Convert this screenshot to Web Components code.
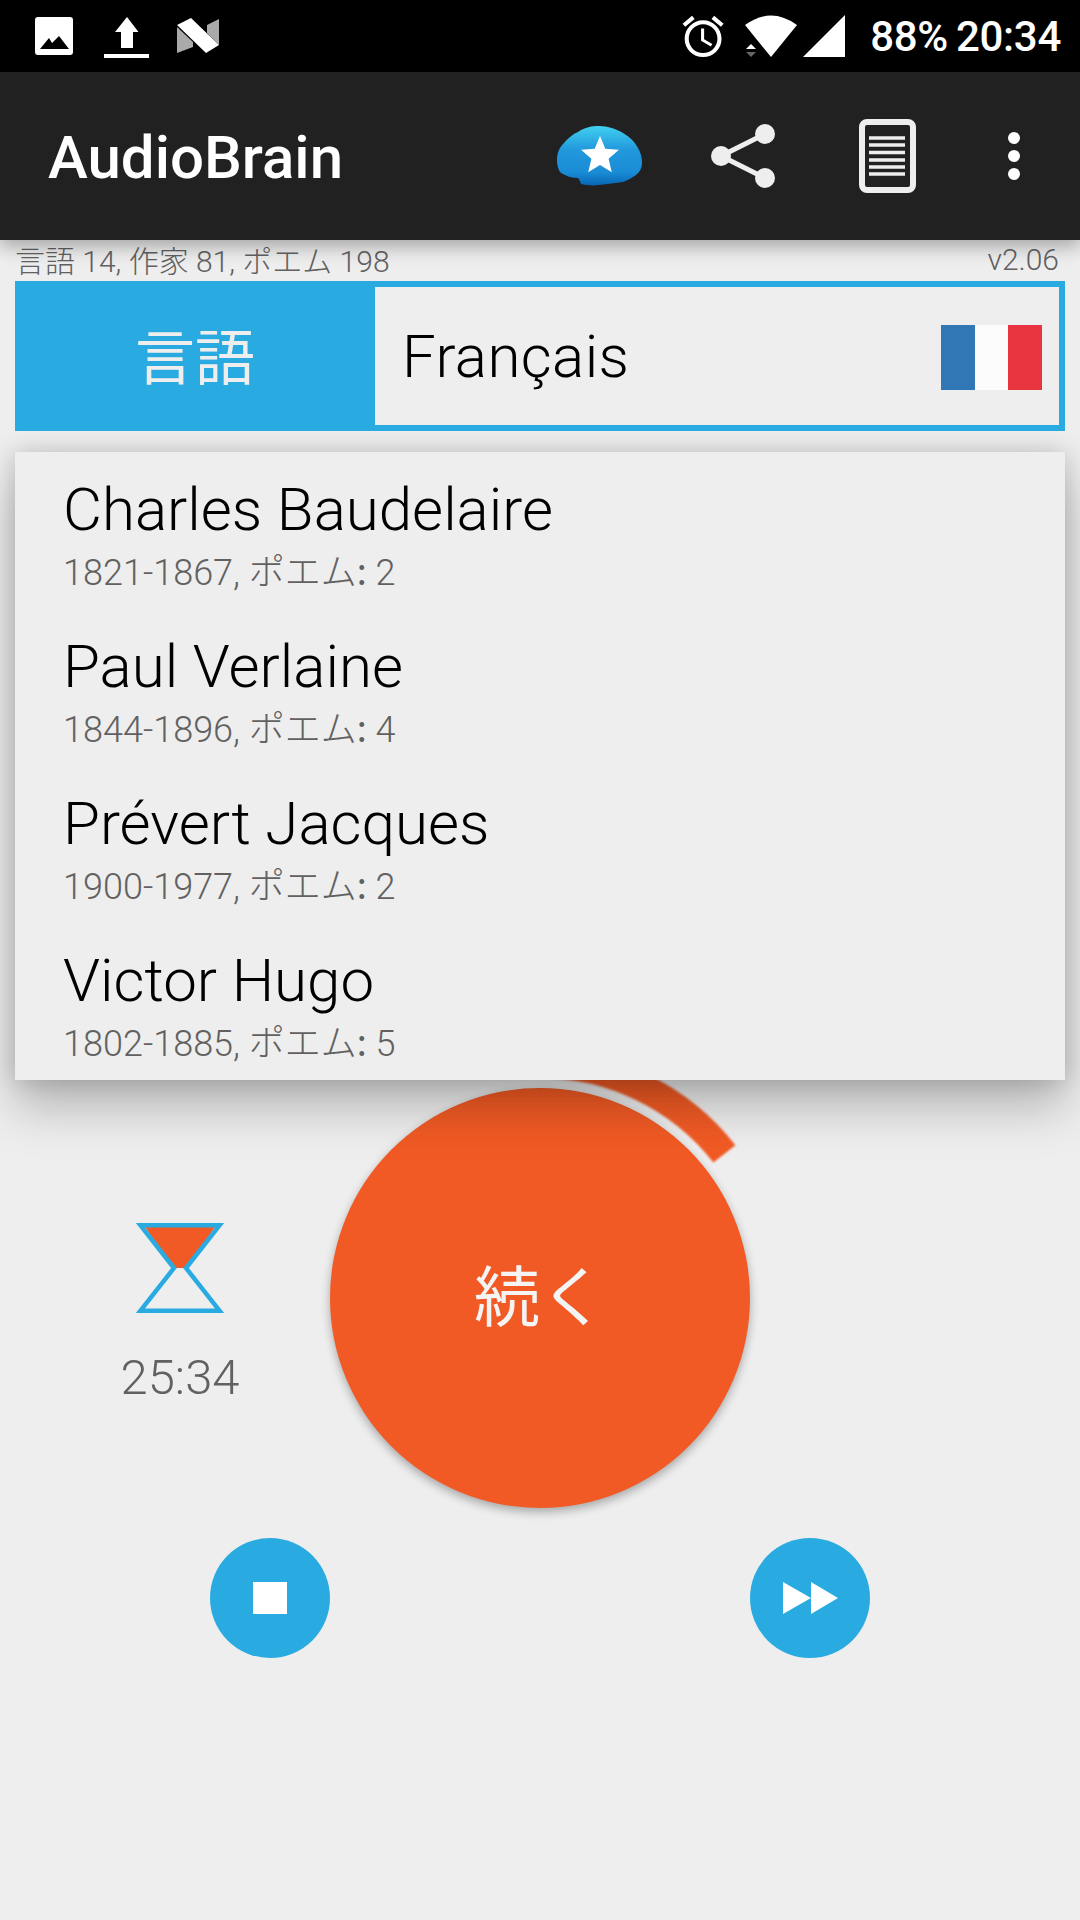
<!DOCTYPE html>
<html lang="ja">
<head>
<meta charset="utf-8">
<title>AudioBrain</title>
<style>
    html, body { margin: 0; padding: 0; }
    body {
        width: 1080px;
        height: 1920px;
        overflow: hidden;
        background: #eeeeee;
        font-family: Roboto, "Noto Sans CJK JP", sans-serif;
    }
</style>
</head>
<body>
<audio-app></audio-app>

<script>
const define = (name, html) => {
    customElements.define(name, class extends HTMLElement {
        constructor() {
            super();
            this.attachShadow({ mode: 'open' }).innerHTML = html;
        }
    });
};

define('status-bar', `
    <style>
        :host { display: block; position: relative; height: 72px; background: #000; color: #fff; }
        svg { position: absolute; top: 0; left: 0; }
        .clock {
            position: absolute; top: 0; right: 19px; height: 72px;
            display: flex; align-items: center; gap: 8px;
            font: 500 42px Roboto, sans-serif; letter-spacing: -0.3px;
        }
    </style>
    <svg width="1080" height="72" viewBox="0 0 1080 72">
        <!-- picture -->
        <path fill="#fff" fill-rule="evenodd" d="M38 17h32a3 3 0 0 1 3 3v32a3 3 0 0 1-3 3H38a3 3 0 0 1-3-3V20a3 3 0 0 1 3-3zM40 49h29L59 36l-7 7-3-5z"/>
        <!-- upload -->
        <path fill="#fff" d="M127 17l11.500 15H133v16h-12V32h-6zM104 54h45v4h-45z"/>
        <!-- android n -->
        <path fill="#aaa" d="M177 27l16 15v5l-16 6zM207 25l12-6v26l-12-12z"/>
        <path fill="#fff" d="M177 25l14-7 28 27-13 8z"/>
        <!-- alarm -->
        <g transform="translate(678.500 12) scale(2.05)">
            <path fill="#fff" d="M22 5.720l-4.600-3.860-1.290 1.530 4.600 3.860L22 5.720zM7.880 3.390L6.600 1.860 2 5.710l1.290 1.530 4.590-3.850zM12.500 8H11v6l4.750 2.850.75-1.230-4-2.370V8zM12 4c-4.970 0-9 4.030-9 9s4.020 9 9 9c4.970 0 9-4.030 9-9s-4.030-9-9-9zm0 16c-3.870 0-7-3.130-7-7s3.130-7 7-7 7 3.130 7 7-3.130 7-7 7z"/>
        </g>
        <!-- wifi -->
        <path fill="#fff" d="M745 25Q771 6 797 25L771 57z"/>
        <path fill="#fff" d="M751 44l5 5h-10z"/>
        <path fill="#666" d="M746 52h10l-5 5z"/>
        <!-- signal -->
        <path fill="#fff" d="M803 57l42-42v42z"/>
    </svg>
    <div class="clock"><span>88%</span><span>20:34</span></div>
`);

define('app-bar', `
    <style>
        :host {
            display: flex; align-items: center; height: 168px;
            padding: 2px 0 0 48px; box-sizing: border-box;
            background: #212121; color: #fff;
            position: relative; z-index: 4;
            box-shadow: 0 6px 18px rgba(0, 0, 0, 0.32);
        }
        .title { font: 500 60px Roboto, sans-serif; }
        svg { position: absolute; top: 0; left: 540px; }
    </style>
    <div class="title">AudioBrain</div>
    <svg width="540" height="168" viewBox="540 72 540 168">
        <defs>
            <linearGradient id="brain" x1="0" y1="0" x2="0" y2="1">
                <stop offset="0" stop-color="#40d0f0"/>
                <stop offset="0.4" stop-color="#2298dc"/>
                <stop offset="0.78" stop-color="#1a8cd6"/>
                <stop offset="1" stop-color="#0766b4"/>
            </linearGradient>
        </defs>
        <path fill="url(#brain)" d="M557 160C557 152 560 147 564 143C568 138 573 134 578 132C585 127 592 126 599 126C608 126 616 129 623 133C630 137 635 142 638 148C641 153 642 158 642 163C642 168 640 172 636 175C632 178 628 180 623 182C616 183 608 184 599 185C592 186 586 185 581 184C580 181 579 179 578 178C572 178 566 176 561 173C558 170 557 165 557 160z"/>
        <path fill="#fff" d="M600 136L605.300 148.700 619 149.800 608.600 158.800 611.800 172.200 600 165 588.200 172.200 591.400 158.800 581 149.800 594.700 148.700z"/>
        <!-- share -->
        <g fill="#eee" stroke="none">
            <circle cx="765" cy="134" r="10"/>
            <circle cx="721" cy="156" r="10"/>
            <circle cx="765" cy="178" r="10"/>
        </g>
        <path fill="none" stroke="#eee" stroke-width="5" d="M765 134L721 156L765 178"/>
        <!-- document -->
        <rect x="862" y="122" width="51" height="68" rx="5" fill="none" stroke="#eee" stroke-width="6"/>
        <path stroke="#eee" stroke-width="3.500" d="M869 138h36M869 145h36M869 152.500h36M869 160h36M869 167h36M869 174h36"/>
        <!-- overflow -->
        <g fill="#fff">
            <circle cx="1014" cy="138" r="6"/>
            <circle cx="1014" cy="156" r="6"/>
            <circle cx="1014" cy="174" r="6"/>
        </g>
    </svg>
`);

define('stats-line', `
    <style>
        :host {
            display: flex; justify-content: space-between; align-items: center;
            height: 41px; box-sizing: border-box; padding: 0 6px 3px 0;
            font: 300 30px Roboto, "Noto Sans CJK JP", sans-serif; color: #616161;
        }
    </style>
    <span><slot name="counts"></slot></span>
    <span><slot name="version"></slot></span>
`);

define('lang-picker', `
    <style>
        :host {
            display: flex; height: 150px; box-sizing: border-box;
            border: 6px solid #29abe2; background: #eeeeee;
            position: relative; z-index: 3;
        }
        .label {
            width: 354px; box-sizing: border-box; background: #29abe2; color: #eeeeee;
            display: flex; align-items: center; justify-content: center;
            font: 400 60px "Noto Sans CJK JP", sans-serif;
            padding: 0 6px 6px 0;
        }
        .value {
            flex: 1; display: flex; align-items: center; justify-content: space-between;
            padding: 0 17px 0 27px;
            font: 300 60px Roboto, sans-serif; letter-spacing: 0.4px; color: #000;
        }
        .flag { display: flex; width: 101px; height: 65px; margin-top: 2px; }
        .flag i { flex: 1; }
    </style>
    <div class="label"><slot name="label"></slot></div>
    <div class="value">
        <slot name="value"></slot>
        <div class="flag">
            <i style="background:#3277b5"></i>
            <i style="background:#fcfcfc"></i>
            <i style="background:#e8353f"></i>
        </div>
    </div>
`);

define('poet-list', `
    <style>
        :host {
            display: block; margin-top: 21px; height: 628px; background: #eeeeee;
            position: relative; z-index: 2;
            box-shadow: 0 26px 46px rgba(0, 0, 0, 0.25), 0 0 22px rgba(0, 0, 0, 0.16);
        }
    </style>
    <slot></slot>
`);

define('poet-item', `
    <style>
        :host {
            display: block; height: 157px; box-sizing: border-box;
            padding: 23px 0 0 48px; overflow: hidden;
        }
        .name { height: 70px; font: 300 60px/70px Roboto, sans-serif; color: #000; }
        .sub {
            height: 42px; margin-top: 7px;
            font: 300 36px/42px Roboto, "Noto Sans CJK JP", sans-serif; color: #616161;
        }
    </style>
    <div class="name"><slot name="name"></slot></div>
    <div class="sub"><slot name="sub"></slot></div>
`);

define('round-button', `
    <style>
        :host {
            display: flex; align-items: center; justify-content: center;
            width: 120px; height: 120px; border-radius: 50%;
            background: #29abe2;
        }
    </style>
    <slot></slot>
`);

define('big-button', `
    <style>
        :host {
            display: flex; align-items: center; justify-content: center;
            position: relative; width: 420px; height: 420px; border-radius: 50%;
            background: #f15a24; color: #f4f4f4;
            box-shadow: 0 4px 10px rgba(0, 0, 0, 0.3);
            font: 400 66px "Noto Sans CJK JP", sans-serif;
        }
        svg { position: absolute; left: -50px; top: -50px; filter: blur(0.8px); }
        span { position: relative; top: -6px; }
    </style>
    <svg width="520" height="520" viewBox="-260 -260 520 520">
        <path fill="none" stroke="#f15a24" stroke-width="28" d="M0 -234A234 234 0 0 1 184.400 -144.100"/>
    </svg>
    <span><slot></slot></span>
`);

define('sleep-timer', `
    <style>
        :host { display: flex; flex-direction: column; align-items: center; }
        svg { display: block; }
        .time {
            margin-top: 36px;
            font: 300 49px/58px Roboto, sans-serif; color: #616161;
        }
    </style>
    <svg width="88" height="90" viewBox="0 0 88 90">
        <path fill="#f15a24" d="M9 4h70L51 45H37z"/>
        <path fill="none" stroke="#29abe2" stroke-width="4.500" d="M4.500 2.300h79L50 45L83.500 87.700h-79L38 45z"/>
    </svg>
    <div class="time"><slot></slot></div>
`);

define('player-panel', `
    <style>
        :host { display: block; }
        .top { display: grid; grid-template-columns: 330px 420px 330px; margin-top: 8px; }
        .timer { padding: 135px 0 0 30px; }
        .controls {
            display: flex; justify-content: space-between;
            margin-top: 30px; padding: 0 210px;
        }
    </style>
    <div class="top">
        <div class="timer"><slot name="timer"></slot></div>
        <slot name="main"></slot>
    </div>
    <div class="controls">
        <slot name="stop"></slot>
        <slot name="next"></slot>
    </div>
`);

define('audio-app', `
    <style>
        :host { display: block; }
        main { padding: 0 15px; }
        svg { display: block; }
        .ja { font-family: "Noto Sans CJK JP", sans-serif; font-weight: 400; line-height: 0; }
    </style>
    <status-bar></status-bar>
    <app-bar></app-bar>
    <main>
        <stats-line>
            <span slot="counts">言語 14, 作家 81, ポエム 198</span>
            <span slot="version">v2.06</span>
        </stats-line>
        <lang-picker>
            <span slot="label">言語</span>
            <span slot="value">Français</span>
        </lang-picker>
        <poet-list>
            <poet-item><span slot="name">Charles Baudelaire</span><span slot="sub">1821-1867, ポエム<span class="ja">:</span> 2</span></poet-item>
            <poet-item><span slot="name">Paul Verlaine</span><span slot="sub">1844-1896, ポエム<span class="ja">:</span> 4</span></poet-item>
            <poet-item><span slot="name">Prévert Jacques</span><span slot="sub">1900-1977, ポエム<span class="ja">:</span> 2</span></poet-item>
            <poet-item><span slot="name">Victor Hugo</span><span slot="sub">1802-1885, ポエム<span class="ja">:</span> 5</span></poet-item>
        </poet-list>
    </main>
    <player-panel>
        <sleep-timer slot="timer">25:34</sleep-timer>
        <big-button slot="main">続く</big-button>
        <round-button slot="stop">
            <svg width="34" height="32" viewBox="0 0 34 32"><rect width="34" height="32" fill="#fff"/></svg>
        </round-button>
        <round-button slot="next">
            <svg width="55" height="32" viewBox="0 0 55 32"><path fill="#fff" d="M0 0l28 16L0 32zM28 0l27 16L28 32z"/></svg>
        </round-button>
    </player-panel>
`);
</script>
</body>
</html>
